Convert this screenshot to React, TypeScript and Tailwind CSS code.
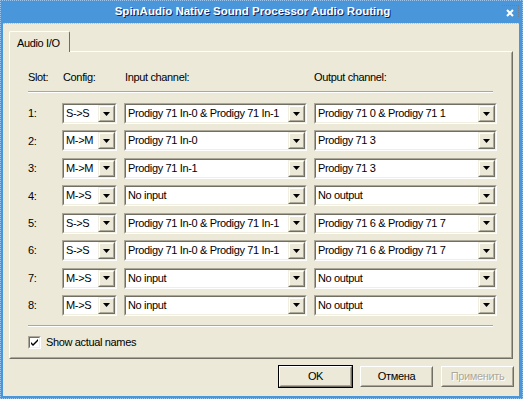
import React from 'react';

type Row = { slot: string; config: string; input: string; output: string };

const rows: Row[] = [
  { slot: '1:', config: 'S->S', input: 'Prodigy 71 In-0 & Prodigy 71 In-1', output: 'Prodigy 71 0 & Prodigy 71 1' },
  { slot: '2:', config: 'M->M', input: 'Prodigy 71 In-0', output: 'Prodigy 71 3' },
  { slot: '3:', config: 'M->M', input: 'Prodigy 71 In-1', output: 'Prodigy 71 3' },
  { slot: '4:', config: 'M->S', input: 'No input', output: 'No output' },
  { slot: '5:', config: 'S->S', input: 'Prodigy 71 In-0 & Prodigy 71 In-1', output: 'Prodigy 71 6 & Prodigy 71 7' },
  { slot: '6:', config: 'S->S', input: 'Prodigy 71 In-0 & Prodigy 71 In-1', output: 'Prodigy 71 6 & Prodigy 71 7' },
  { slot: '7:', config: 'M->S', input: 'No input', output: 'No output' },
  { slot: '8:', config: 'M->S', input: 'No input', output: 'No output' },
];

function DropButton() {
  return (
    <div className="flex w-[17px] h-full border border-t-[#f1efe2] border-l-[#f1efe2] border-r-[#716f64] border-b-[#716f64]">
      <div className="flex flex-1 items-center justify-center bg-[#ece9d8] border border-t-white border-l-white border-r-[#aca899] border-b-[#aca899]">
        <svg width="7" height="4" viewBox="0 0 7 4">
          <path d="M0 0h7L3.5 4z" fill="#000" />
        </svg>
      </div>
    </div>
  );
}

function Combo({ value, width }: { value: string; width: string }) {
  return (
    <div className={`flex h-[21px] ${width} border border-t-[#aca899] border-l-[#aca899] border-r-white border-b-white`}>
      <div className="flex flex-1 bg-white border border-t-[#716f64] border-l-[#716f64] border-r-[#f1efe2] border-b-[#f1efe2]">
        <span className="flex-1 pl-[2px] leading-[17px] whitespace-nowrap overflow-hidden">{value}</span>
        <DropButton />
      </div>
    </div>
  );
}

function Button({ label, isDefault, disabled }: { label: string; isDefault?: boolean; disabled?: boolean }) {
  const outer = isDefault ? 'border-black' : 'border-transparent';
  return (
    <div className={`w-[75px] h-[23px] border ${outer}`}>
      <div className="h-full border border-t-white border-l-white border-r-[#716f64] border-b-[#716f64]">
        <div
          className={`h-full flex items-center justify-center border border-transparent border-r-[#aca899] border-b-[#aca899] ${
            disabled ? 'text-[#aca899] [text-shadow:1px_1px_0_#fff]' : 'text-black'
          }`}
        >
          {label}
        </div>
      </div>
    </div>
  );
}

export default function App() {
  return (
    <div className="w-[523px] h-[399px] bg-[#4a96da] flex flex-col border border-dotted border-[#9cc6ee] font-['Liberation_Sans',Arial,sans-serif] text-[11px] tracking-[-0.35px] text-black">
      {/* title bar */}
      <div className="relative h-[22px] flex items-center justify-center pr-[18px]">
        <span className="text-white font-bold text-[11.5px] tracking-[0px] [text-shadow:1px_1px_0_#0a246a]">
          SpinAudio Native Sound Processor Audio Routing
        </span>
        <div className="absolute right-[3px] top-[4px] w-[17px] h-[12px] border-t border-r border-dotted border-[#6b7f96] flex items-center justify-center">
          <svg width="8" height="8" viewBox="0 0 8 8" className="mt-[2px]">
            <path d="M1 1l6 6M7 1l-6 6" stroke="#fff" strokeWidth="2" />
          </svg>
        </div>
      </div>

      {/* body */}
      <div className="flex-1 ml-[2px] mr-[3px] mb-[2px] bg-[#ece9d8] border-t border-dotted border-[#9cc6ee] flex flex-col">
        {/* tab strip */}
        <div className="pl-[6px] pt-[7px] flex">
          <div className="relative z-10 w-[61px] h-[21px] bg-[#ece9d8] border border-b-0 border-t-white border-l-white border-r-[#716f64] -mb-[1px] rounded-t-[2px] pl-[7px] pt-[3px]">
            Audio I/O
          </div>
        </div>

        {/* tab panel */}
        <div className="ml-[6px] mr-[6px] h-[308px] border border-t-white border-l-white border-r-[#716f64] border-b-[#716f64]">
          <div className="h-full border border-transparent border-r-[#aca899] border-b-[#aca899] pl-[17px] pt-[17px] flex flex-col">
            {/* header */}
            <div className="flex h-[14px] items-center">
              <span className="w-[35px]">Slot:</span>
              <span className="w-[62px]">Config:</span>
              <span className="w-[189px]">Input channel:</span>
              <span>Output channel:</span>
            </div>
            <div className="mt-[7px] w-[465px] h-[2px] border-t border-t-[#aca899] border-b border-b-white" />

            {/* rows */}
            <div className="mt-[10px] flex flex-col gap-[6.43px]">
              {rows.map((r) => (
                <div key={r.slot} className="flex items-center h-[21px]">
                  <span className="w-[34px]">{r.slot}</span>
                  <Combo value={r.config} width="w-[55px]" />
                  <div className="w-[7px]" />
                  <Combo value={r.input} width="w-[183px]" />
                  <div className="w-[7px]" />
                  <Combo value={r.output} width="w-[183px]" />
                </div>
              ))}
            </div>

            <div className="mt-[9px] w-[465px] h-[2px] border-t border-t-[#aca899] border-b border-b-white" />

            {/* checkbox */}
            <div className="mt-[7px] flex items-center gap-[5px]">
              <div className="w-[13px] h-[13px] border border-t-[#aca899] border-l-[#aca899] border-r-white border-b-white">
                <div className="w-full h-full bg-white border border-t-[#716f64] border-l-[#716f64] border-r-[#f1efe2] border-b-[#f1efe2] flex items-center justify-center">
                  <svg width="7" height="7" viewBox="0 0 7 7">
                    <path d="M0 3l2 2 5-5v2l-5 5-2-2z" fill="#000" />
                  </svg>
                </div>
              </div>
              <span>Show actual names</span>
            </div>
          </div>
        </div>

        {/* buttons */}
        <div className="mt-[6px] flex justify-end pr-[4px] gap-[6px]">
          <Button label="OK" isDefault />
          <Button label="Отмена" />
          <Button label="Применить" disabled />
        </div>
      </div>
    </div>
  );
}
